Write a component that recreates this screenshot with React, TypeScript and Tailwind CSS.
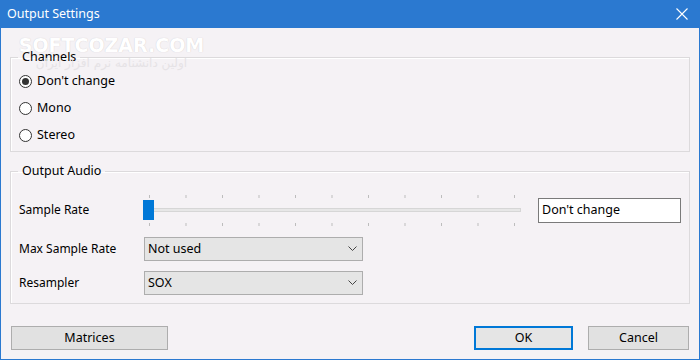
import type { ReactNode } from "react";

const TICKS = Array.from({ length: 11 }, (_, i) => 6.5 + i * 36.5);

export default function App() {
  return (
    <div className="relative w-[700px] h-[360px] flex flex-col bg-[#f5f2f5] border-x border-b border-[#2b79d0] font-['Noto_Sans',sans-serif] text-[12px] text-black overflow-hidden">
      <TitleBar />

      <div className="flex-1 flex flex-col px-[9px]">
        <Group label="Channels" className="mt-[21px] h-[103px]">
          <div className="pl-[8px] pt-[3px] flex flex-col">
            <Radio label="Don't change" checked />
            <Radio label="Mono" />
            <Radio label="Stereo" />
          </div>
        </Group>

        <Group label="Output Audio" className="mt-[11px] h-[141px]">
          <div className="pl-[8px] pt-[13px] flex flex-col">
            <div className="flex items-center h-[36px]">
              <span className="w-[124px]">Sample Rate</span>
              <Slider />
              <div className="ml-[17px] w-[143px] h-[25px] bg-white border border-[#7a7a7a] flex items-center px-[3px] text-[12.5px]">
                Don't change
              </div>
            </div>
            <div className="flex items-center h-[24px] mt-[9px]">
              <span className="w-[125px]">Max Sample Rate</span>
              <Select value="Not used" />
            </div>
            <div className="flex items-center h-[24px] mt-[10px]">
              <span className="w-[125px]">Resampler</span>
              <Select value="SOX" />
            </div>
          </div>
        </Group>

        <div className="mt-[22px] flex items-center">
          <Button className="ml-[1px] w-[157px]">Matrices</Button>
          <Button primary className="ml-auto w-[99px]">
            OK
          </Button>
          <Button className="ml-[15px] mr-[1px] w-[101px]">Cancel</Button>
        </div>
      </div>

      {/* watermark */}
      <div className="absolute left-[13px] top-[35px] w-[195px] pointer-events-none flex flex-col items-center">
        <span className="font-['DejaVu_Sans',sans-serif] font-bold text-[19px] leading-[21px] text-white [text-shadow:0_0_1px_#c8c4c8]">
          SOFTCOZAR.COM
        </span>
        <span className="font-['DejaVu_Sans',sans-serif] text-[12px] leading-[14px] tracking-[1px] text-[#e6e3e6]">
          اولین دانشنامه نرم افزار ایران
        </span>
      </div>
    </div>
  );
}

function TitleBar() {
  return (
    <div className="h-[28px] bg-[#2b79d0] flex items-center pl-[6px] pr-[11px] text-white">
      <span className="text-[12.5px]">Output Settings</span>
      <svg className="ml-auto w-[12px] h-[12px]" viewBox="0 0 12 12" fill="none" stroke="currentColor" strokeWidth={1.1}>
        <path d="M0.5 0.5L11.5 11.5M11.5 0.5L0.5 11.5" />
      </svg>
    </div>
  );
}

function Group({ label, className, children }: { label: string; className: string; children: ReactNode }) {
  return (
    <fieldset className={`border border-[#dcdadc] shadow-[inset_1px_1px_0_#fff] ${className}`}>
      <legend className="ml-[7px] px-[4px] text-[12.5px] leading-[16px]">{label}</legend>
      {children}
    </fieldset>
  );
}

function Radio({ label, checked }: { label: string; checked?: boolean }) {
  return (
    <div className="flex items-center h-[27px] text-[12.5px]">
      <span className="w-[13px] h-[13px] rounded-full border border-[#333] bg-white flex items-center justify-center">
        {checked ? <span className="w-[7px] h-[7px] rounded-full bg-[#333]" /> : null}
      </span>
      <span className="ml-[5px]">{label}</span>
    </div>
  );
}

function Slider() {
  return (
    <div className="relative w-[378px] h-[36px]">
      <svg className="absolute inset-0" width={378} height={36} viewBox="0 0 378 36">
        <rect x={0.5} y={16.5} width={377} height={3} fill="#e7e7e7" stroke="#d6d6d6" />
        {TICKS.map((x) => (
          <g key={x} stroke="#bdbdbd" strokeWidth={1}>
            <line x1={x} y1={3} x2={x} y2={6} />
            <line x1={x} y1={31} x2={x} y2={34} />
          </g>
        ))}
      </svg>
      <div className="absolute left-0 top-[8px] w-[11px] h-[20px] bg-[#0078d7]" />
    </div>
  );
}

function Select({ value }: { value: string }) {
  return (
    <div className="w-[219px] h-full bg-[#e5e5e5] border border-[#adadad] flex items-center pl-[3px] pr-[5px] text-[12.5px]">
      <span>{value}</span>
      <svg className="ml-auto w-[9px] h-[6px]" viewBox="0 0 9 6" fill="none" stroke="#444" strokeWidth={1}>
        <path d="M0.5 0.5L4.5 4.5L8.5 0.5" />
      </svg>
    </div>
  );
}

function Button({ children, primary, className }: { children: ReactNode; primary?: boolean; className: string }) {
  return (
    <button
      type="button"
      className={`h-[24px] flex items-center justify-center text-[12.5px] ${
        primary ? "bg-[#e5e5e5] border-2 border-[#0078d7]" : "bg-[#e1e1e1] border border-[#adadad]"
      } ${className}`}
    >
      {children}
    </button>
  );
}
